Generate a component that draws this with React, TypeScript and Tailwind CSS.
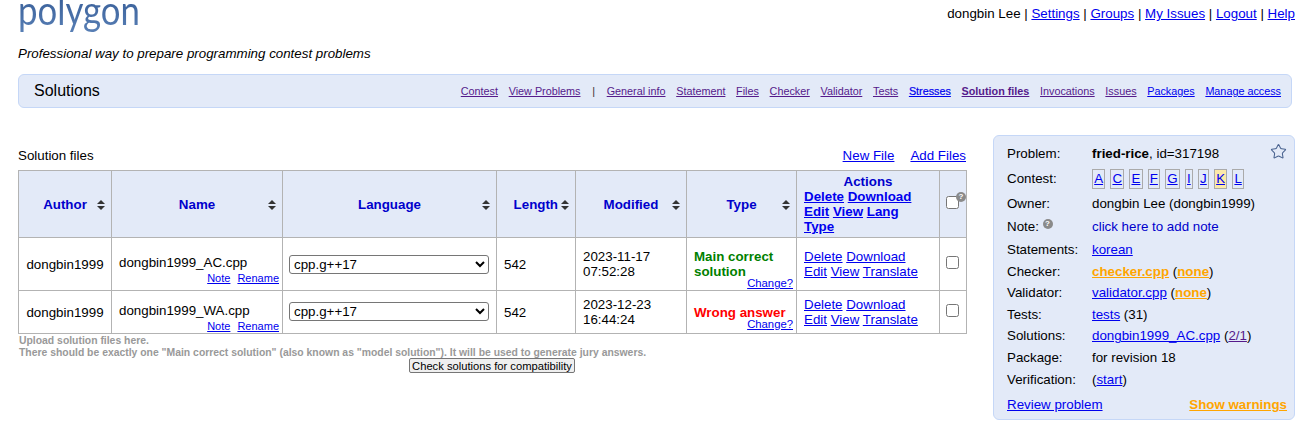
import { Star } from 'lucide-react'

const navLeft = ['Contest', 'View Problems']
const navRight = [
  { label: 'General info', visited: true },
  { label: 'Statement', visited: true },
  { label: 'Files', visited: true },
  { label: 'Checker', visited: true },
  { label: 'Validator', visited: true },
  { label: 'Tests', visited: true },
  { label: 'Stresses', extra: '[-webkit-text-stroke:0.2px]' },
  { label: 'Solution files', visited: true, extra: 'font-bold' },
  { label: 'Invocations', visited: true },
  { label: 'Issues', visited: true },
  { label: 'Packages' },
  { label: 'Manage access' },
]

const rows = [
  { name: 'dongbin1999_AC.cpp', date: '2023-11-17', time: '07:52:28', type: 'Main correct solution', color: 'text-[#008000]', h: 'h-[53px]', sel: '', nameBox: 'pt-[12px]' },
  { name: 'dongbin1999_WA.cpp', date: '2023-12-23', time: '16:44:24', type: 'Wrong answer', color: 'text-[#ff0000]', h: 'h-[43px]', sel: 'mb-[2px]', nameBox: 'pt-[11px]' },
]

const contests = ['A', 'C', 'E', 'F', 'G', 'I', 'J', 'K', 'L']

function A({ children, className = '' }: { children: React.ReactNode; className?: string }) {
  return <a href="#" className={`text-[#0000ee] underline ${className}`}>{children}</a>
}

function SortIcon() {
  return (
    <svg width="8" height="10" viewBox="0 0 8 10" className="shrink-0 fill-[#333]">
      <path d="M4 0 8 4H0Z" />
      <path d="M4 10 0 6h8Z" />
    </svg>
  )
}

function Help() {
  return (
    <span className="inline-flex h-[10px] w-[10px] items-center justify-center rounded-full bg-[#8a8a8a] text-[8px] font-bold leading-none text-white">?</span>
  )
}

function Head({ label }: { label: string }) {
  return (
    <th className="border border-[#b3b3b3] bg-[#e3eaf8] px-[6px] pt-[2px] font-bold">
      <div className="flex items-center">
        <span className="flex flex-1 justify-center pl-[8px] text-[#0000cc]">{label}</span>
        <SortIcon />
      </div>
    </th>
  )
}

function Info({ label, children, h = 'h-[21.6px]' }: { label: React.ReactNode; children: React.ReactNode; h?: string }) {
  return (
    <div className={`flex items-center ${h}`}>
      <div className="w-[85px] shrink-0">{label}</div>
      <div>{children}</div>
    </div>
  )
}

export default function App() {
  return (
    <div className="h-[428px] w-[1310px] overflow-hidden bg-white font-['Liberation_Sans',Arial,sans-serif] text-[13.33px] text-black">
      <header className="pl-[18px] pr-[15px]">
        <div className="flex h-[37px] justify-between">
          <div className="-mt-[13px] h-[52px] origin-left scale-x-[0.87] bg-gradient-to-b from-[#2f5590] to-[#5f86bb] bg-clip-text font-['Lato',sans-serif] text-[40px] leading-[46px] text-transparent">polygon</div>
          <div className="mt-[5px] leading-[18px]">
            dongbin Lee | <A>Settings</A> | <A>Groups</A> | <A>My Issues</A> | <A>Logout</A> | <A>Help</A>
          </div>
        </div>
        <div className="mt-[8px] h-[18px] leading-[18px] italic">Professional way to prepare programming contest problems</div>
      </header>

      <div className="mx-[18px] mb-[27px] mt-[11px] flex h-[34px] items-center justify-between rounded-[6px] border border-[#c5d7f7] bg-[#e3eaf8] pl-[15px] pr-[10px]">
        <span className="text-[16px]">Solutions</span>
        <nav className="flex items-center gap-[10.7px] text-[10.8px]">
          {navLeft.map((n) => (
            <A key={n} className="text-[#551a8b]">{n}</A>
          ))}
          <span className="mx-[1px] text-[#333]">|</span>
          {navRight.map((n) => (
            <A key={n.label} className={`${n.visited ? 'text-[#551a8b]' : ''} ${n.extra ?? ''}`}>{n.label}</A>
          ))}
        </nav>
      </div>

      <div className="flex items-start pl-[18px]">
        <main className="w-[948px] pt-[13px]">
          <div className="flex h-[15px] items-center justify-between leading-[15px]">
            <span>Solution files</span>
            <span className="flex gap-[16px]">
              <A>New File</A>
              <A>Add Files</A>
            </span>
          </div>
          <table className="mt-[7px] w-[948px] table-fixed border-collapse">
            <colgroup>
              <col className="w-[93px]" />
              <col className="w-[171px]" />
              <col className="w-[214px]" />
              <col className="w-[79px]" />
              <col className="w-[111px]" />
              <col className="w-[110px]" />
              <col className="w-[143px]" />
              <col className="w-[27px]" />
            </colgroup>
            <thead>
              <tr className="h-[67px]">
                <Head label="Author" />
                <Head label="Name" />
                <Head label="Language" />
                <th className="border border-[#b3b3b3] bg-[#e3eaf8] px-[6px] pt-[2px] font-bold">
                  <div className="flex items-center justify-end gap-[3px] text-[#0000cc]">Length<SortIcon /></div>
                </th>
                <Head label="Modified" />
                <Head label="Type" />
                <th className="border border-[#b3b3b3] bg-[#e3eaf8] px-[7px] text-left font-bold leading-[15px]">
                  <div className="text-center text-[#0000cc]">Actions</div>
                  <A>Delete</A> <A>Download</A><br />
                  <A>Edit</A> <A>View</A> <A>Lang</A><br />
                  <A>Type</A>
                </th>
                <th className="border border-[#b3b3b3] bg-[#e3eaf8] px-[6px]">
                  <div className="relative mb-[4px] flex">
                    <input type="checkbox" className="m-0" />
                    <span className="absolute -top-[4px] left-[10px] flex"><Help /></span>
                  </div>
                </th>
              </tr>
            </thead>
            <tbody>
              {rows.map((r) => (
                <tr key={r.name} className={r.h}>
                  <td className="border border-[#b3b3b3] pt-[2px] text-center">dongbin1999</td>
                  <td className={`border border-[#b3b3b3] pl-[7px] pr-[3px] ${r.nameBox}`}>
                    <div className="leading-[15px]">{r.name}</div>
                    <div className="mt-[2px] flex justify-end gap-[7px] text-[11px] leading-[13px]">
                      <A>Note</A>
                      <A>Rename</A>
                    </div>
                  </td>
                  <td className="border border-[#b3b3b3] px-[6px]">
                    <select className={`block h-[19px] w-[200px] rounded-[3px] border border-[#767676] bg-white ${r.sel}`}>
                      <option>cpp.g++17</option>
                    </select>
                  </td>
                  <td className="border border-[#b3b3b3] px-[7px] pt-[2px]">542</td>
                  <td className="border border-[#b3b3b3] px-[7px] leading-[15px]">
                    {r.date}<br />{r.time}
                  </td>
                  <td className="border border-[#b3b3b3] pl-[7px] pr-[3px] pt-[10px]">
                    <div className={`font-bold leading-[15px] ${r.color}`}>{r.type}</div>
                    <div className="-mt-[1px] text-right text-[11.3px] leading-[11px]"><A>Change?</A></div>
                  </td>
                  <td className="border border-[#b3b3b3] px-[7px] leading-[15px]">
                    <A>Delete</A> <A>Download</A><br />
                    <A>Edit</A> <A>View</A> <A>Translate</A>
                  </td>
                  <td className="border border-[#b3b3b3] px-[6px] pb-[4px]">
                    <input type="checkbox" className="m-0 block" />
                  </td>
                </tr>
              ))}
            </tbody>
          </table>
          <div className="pl-[1px] pt-[1px] text-[10.4px] font-bold leading-[12px] text-[#999]">
            <div>Upload solution files here.</div>
            <div>There should be exactly one "Main correct solution" (also known as "model solution"). It will be used to generate jury answers.</div>
          </div>
          <div className="-mt-[1px] flex justify-center">
            <button className="h-[15px] rounded-[2px] border border-[#767676] bg-[#efefef] px-[2px] text-[11.2px] leading-[12px] text-black">Check solutions for compatibility</button>
          </div>
        </main>

        <aside className="relative ml-[27px] h-[285px] w-[302px] rounded-[6px] border border-[#c5d7f7] bg-[#e3eaf8] pl-[13px] pr-[7px] pt-[7px]">
          <Info label="Problem:"><b>fried-rice</b>, id=317198</Info>
          <span className="absolute right-[7px] top-[7px] text-[#4a6390]"><Star size={17} strokeWidth={1.5} /></span>
          <Info label="Contest:" h="h-[29px]">
            <div className="flex gap-[5px]">
              {contests.map((c) => (
                <span key={c} className={`flex h-[20px] items-center border border-[#aaa] px-[1.2px] ${c === 'K' ? 'bg-[#fbe9a9]' : ''}`}>
                  <A>{c}</A>
                </span>
              ))}
            </div>
          </Info>
          <Info label="Owner:">dongbin Lee (dongbin1999)</Info>
          <Info label={<span>Note: <span className="relative -top-[5px]"><Help /></span></span>} h="h-[24px]">
            <span className="text-[#0000cc]">click here to add note</span>
          </Info>
          <Info label="Statements:"><A>korean</A></Info>
          <Info label="Checker:"><A className="font-bold text-[#ffa500]">checker.cpp</A> (<A className="font-bold text-[#ffa500]">none</A>)</Info>
          <Info label="Validator:"><A>validator.cpp</A> (<A className="font-bold text-[#ffa500]">none</A>)</Info>
          <Info label="Tests:"><A>tests</A> (31)</Info>
          <Info label="Solutions:"><A>dongbin1999_AC.cpp</A> (<A className="text-[#551a8b]">2/1</A>)</Info>
          <Info label="Package:">for revision 18</Info>
          <Info label="Verification:">(<A>start</A>)</Info>
          <div className="mt-[5px] flex justify-between">
            <A>Review problem</A>
            <A className="font-bold text-[#ffa500]">Show warnings</A>
          </div>
        </aside>
      </div>
    </div>
  )
}
